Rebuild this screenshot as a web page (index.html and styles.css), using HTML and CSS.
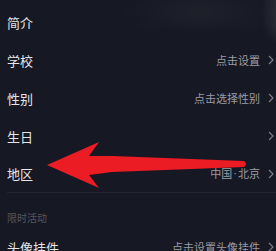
FILE: index.html
```html
<!DOCTYPE html>
<html lang="zh">
<head>
<meta charset="utf-8">
<link rel="stylesheet" href="styles.css">
</head>
<body>
<div class="page">
  <div class="glow"></div>
  <ul class="list">
    <li class="row"><span class="label">简介</span></li>
    <li class="row"><span class="label">学校</span><span class="value">点击设置<svg class="chev" viewBox="0 0 6 10"><polyline points="1,1 5,5 1,9"/></svg></span></li>
    <li class="row"><span class="label">性别</span><span class="value">点击选择性别<svg class="chev" viewBox="0 0 6 10"><polyline points="1,1 5,5 1,9"/></svg></span></li>
    <li class="row"><span class="label">生日</span><span class="value"><svg class="chev" viewBox="0 0 6 10"><polyline points="1,1 5,5 1,9"/></svg></span></li>
    <li class="row last"><span class="label">地区</span><span class="value">中国<span class="dot">·</span>北京<svg class="chev" viewBox="0 0 6 10"><polyline points="1,1 5,5 1,9"/></svg></span></li>
  </ul>
  <div class="section">限时活动</div>
  <ul class="list">
    <li class="row"><span class="label">头像挂件</span><span class="value">点击设置头像挂件<svg class="chev" viewBox="0 0 6 10"><polyline points="1,1 5,5 1,9"/></svg></span></li>
  </ul>
  <svg class="arrow" viewBox="0 0 276 251" width="276" height="251">
    <path d="M47,165 L99,142 L89,156 L112,156 L244,161 Q248,164 244,167 L112,172 L89,175 L99,188 Z"/>
  </svg>
</div>
</body>
</html>
```
FILE: styles.css
```css
html, body {
  margin: 0;
  padding: 0;
  background: #161823;
}
body {
  width: 276px;
  height: 251px;
  overflow: hidden;
  font-family: "Noto Sans CJK SC", "Noto Sans", sans-serif;
}
.page {
  position: relative;
  width: 276px;
  height: 251px;
  overflow: hidden;
  padding-top: 3px;
  box-sizing: border-box;
}
.glow {
  position: absolute;
  left: 0;
  top: 0;
  width: 276px;
  height: 45px;
  background:
    linear-gradient(to right, rgba(255,255,255,0) 0, rgba(255,255,255,0) 262px, rgba(255,255,255,0.08) 276px),
    radial-gradient(ellipse 90px 30px at 200px 12px, rgba(255,255,255,0.035), rgba(255,255,255,0));
  -webkit-mask-image: linear-gradient(to bottom, #000 0, #000 25px, transparent 45px);
  mask-image: linear-gradient(to bottom, #000 0, #000 25px, transparent 45px);
}
.list {
  list-style: none;
  margin: 0;
  padding: 0;
  position: relative;
}
.row {
  height: 38px;
  display: flex;
  align-items: center;
  justify-content: space-between;
  padding-left: 7px;
  padding-right: 2px;
}
.row.last {
  border-bottom: 1px solid #23252f;
  margin-left: 7px;
  padding-left: 0;
  height: 37px;
}
.label {
  color: #e6e6e9;
  font-size: 13px;
  line-height: 1;
}
.value {
  display: flex;
  align-items: center;
  color: #9b9ca4;
  font-size: 11px;
  line-height: 1;
}
.dot {
  font-family: "Liberation Sans", sans-serif;
  padding: 0 1px;
}
.chev {
  width: 6px;
  height: 10px;
  margin-left: 8px;
  fill: none;
  stroke: #7b7c85;
  stroke-width: 1.2;
}
.section {
  height: 35px;
  box-sizing: border-box;
  padding: 19px 0 0 7px;
  color: #55575f;
  font-size: 10px;
  line-height: 12px;
}
.arrow {
  position: absolute;
  left: 0;
  top: 0;
}
.arrow path {
  fill: #ec1c24;
}
```
